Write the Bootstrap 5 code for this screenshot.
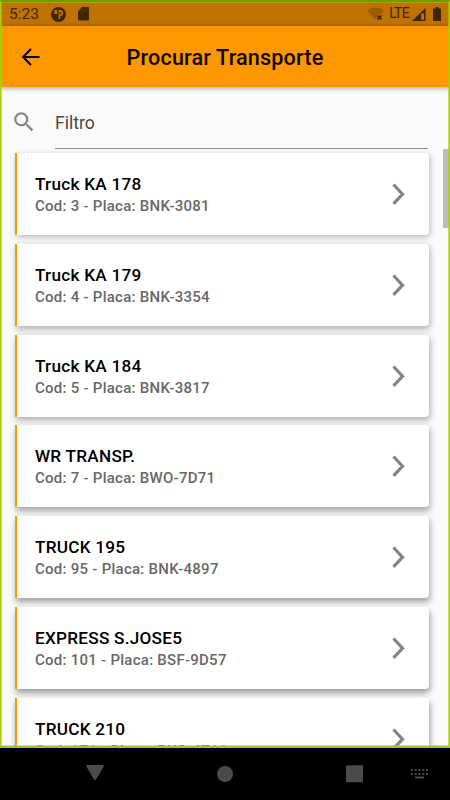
<!DOCTYPE html>
<html lang="pt-BR">
<head>
<meta charset="utf-8">
<meta name="viewport" content="width=device-width, initial-scale=1">
<title>Procurar Transporte</title>
<link href="https://cdn.jsdelivr.net/npm/bootstrap@5.3.0/dist/css/bootstrap.min.css" rel="stylesheet">
<style>
body{font-family:Roboto,"Liberation Sans",sans-serif;background:#000;height:800px;overflow:hidden}
svg{display:block;flex:none}
.screen{height:748px;background:#fafafa}
.frame-line{inset:0;border:1px solid #a9d000;border-top:2px solid #709c00;border-bottom:2px solid #a4c51c;box-shadow:inset 0 0 0 .6px #a9d000;pointer-events:none;z-index:5}
.status{height:26px;background:#bf7200;color:#402600;padding:2px 9px 0 9px}
.clock{font-size:15.5px;line-height:24px;width:42px}
.lte{font-size:14px;line-height:24px;letter-spacing:-.7px;margin-left:5px;margin-top:-2px}
.sdcard{margin-left:11px}
.signal{margin-left:3px}
.battery{margin-left:7px}
.appbar{height:61px;background:#ff9800;box-shadow:0 1px 5px rgba(0,0,0,.38);z-index:2}
.appbar h1{font-size:21.6px;font-weight:500;line-height:26px;letter-spacing:.16px;color:#0d0800;padding-top:2px}
.back{left:18px;top:19px}
.filter{height:62px;padding:0 22px 0 11px}
.filter-field{margin-left:18px;border-bottom:1px solid #8c8c8c;font-size:17.6px;line-height:24px;padding-top:24px;color:#484848}
.items{padding:4px 21px 0 15px;gap:8.8px}
.item{height:82px;border-left:2.2px solid #ff9800;border-radius:0 4px 4px 0;padding:0 20px 0 18px;flex:none}
.item h2{font-size:17.2px;line-height:22px;letter-spacing:.24px;font-weight:500;color:#000;padding-top:2px}
.item p{font-size:15px;line-height:22px;letter-spacing:.26px;font-weight:500;color:#686868}
.thumb{right:1px;top:149px;width:6px;height:79px;background:#bcbcbc}
.sysbar{height:52px}
</style>
<script src="https://cdn.jsdelivr.net/npm/bootstrap@5.3.0/dist/js/bootstrap.bundle.min.js"></script>
</head>
<body class="m-0">
<div class="screen position-relative overflow-hidden d-flex flex-column">
  <div class="status d-flex align-items-center flex-shrink-0">
    <span class="clock">5:23</span>
    <svg width="15" height="15" viewBox="0 0 15 15"><circle cx="7.5" cy="7.5" r="7.500" fill="#402600"/><path d="M3.500 3v4h2.700V3zM7.600 3v9h1.600V9a3 3 0 0 0 0-6z" fill="#bf7200"/><circle cx="9.300" cy="6" r="1" fill="#402600"/></svg>
    <svg class="sdcard me-auto" width="13" height="14" viewBox="0 0 13 14"><path d="M5 0h6a1 1 0 0 1 1 1v11.500a1 1 0 0 1-1 1H2a1 1 0 0 1-1-1V4.500z" fill="#402600"/><path d="M5 2v2.500M7.300 2v2.500M9.600 2v2.500" stroke="#5a3500" stroke-width="1"/></svg>
    <svg width="17" height="14" viewBox="0 0 17 14"><path d="M0 3.500C4.500-.5 12-.5 16.500 3.500L13.500 7.500H10V11L8.300 13z" fill="#9c5d00"/><path d="M10.500 8.500l4 4m0-4l-4 4" stroke="#402600" stroke-width="1.700"/></svg>
    <span class="lte">LTE</span>
    <svg class="signal" width="14" height="13" viewBox="0 0 14 13"><path d="M0 13L13.500 0v13z" fill="#402600"/><path d="M9.200 5.500h2.800v6.300H9.200z" fill="#bf7200"/></svg>
    <svg class="battery" width="8" height="14" viewBox="0 0 8 14"><path d="M2.500 0h3v1.500H8V14H0V1.500h2.500z" fill="#402600"/></svg>
  </div>
  <header class="appbar position-relative d-flex align-items-center justify-content-center flex-shrink-0">
    <svg class="back position-absolute" width="26" height="24" viewBox="0 0 26 24"><path d="M21.500 12H6M13 4L5 12l8 8" fill="none" stroke="#000" stroke-width="1.900"/></svg>
    <h1 class="m-0">Procurar Transporte</h1>
  </header>
  <div class="filter d-flex flex-shrink-0">
    <svg class="align-self-center mt-2" width="26" height="26" viewBox="0 0 24 24" fill="#858585"><path d="M15.500 14h-.79l-.28-.27A6.470 6.470 0 0 0 16 9.500 6.500 6.500 0 1 0 9.500 16c1.610 0 3.090-.59 4.230-1.570l.27.28v.79l5 4.990L20.490 19zm-6 0C7.010 14 5 11.990 5 9.500S7.010 5 9.500 5 14 7.010 14 9.500 11.990 14 9.500 14z"/></svg>
    <div class="filter-field flex-grow-1">Filtro</div>
  </div>
  <main class="items d-flex flex-column" id="items"></main>
  <div class="thumb position-absolute"></div>
  <div class="frame-line position-absolute"></div>
</div>
<nav class="sysbar">
  <svg width="450" height="52" viewBox="0 0 450 52" fill="#4a4a4a"><path d="M87 17h16q1.500 0 .7 1.500L96 31.500q-1 1.500-2 0L86.300 18.500Q85.500 17 87 17z"/><circle cx="225" cy="26" r="8"/><rect x="346" y="17.300" width="17" height="17" rx="1"/><path d="M411 22h17M411 26h17" stroke="#4a4a4a" stroke-width="2" stroke-dasharray="2 1.750"/><path d="M415 28.500h9v2h-9z"/></svg>
</nav>
<script>
const rows=[["Truck KA 178","Cod: 3 - Placa: BNK-3081"],["Truck KA 179","Cod: 4 - Placa: BNK-3354"],["Truck KA 184","Cod: 5 - Placa: BNK-3817"],["WR TRANSP.","Cod: 7 - Placa: BWO-7D71"],["TRUCK 195","Cod: 95 - Placa: BNK-4897"],["EXPRESS S.JOSE5","Cod: 101 - Placa: BSF-9D57"],["TRUCK 210","Cod: 171 - Placa: BKO-4711"]];
// Elevation shadows deepen toward the bottom of the screen.
document.getElementById("items").innerHTML=rows.map(([name,info],i)=>`
<article class="item bg-white d-flex align-items-center" style="box-shadow:1px ${2+i*.4}px 6px rgba(0,0,0,${.28+i*.02})">
<div class="flex-grow-1"><h2 class="m-0">${name}</h2><p class="m-0">${info}</p></div>
<svg width="20" height="24" viewBox="0 0 20 24"><path d="M4.500 2.500L13.500 12.200 4.500 21.800" fill="none" stroke="#858585" stroke-width="3.200"/></svg>
</article>`).join("");
</script>
</body>
</html>
